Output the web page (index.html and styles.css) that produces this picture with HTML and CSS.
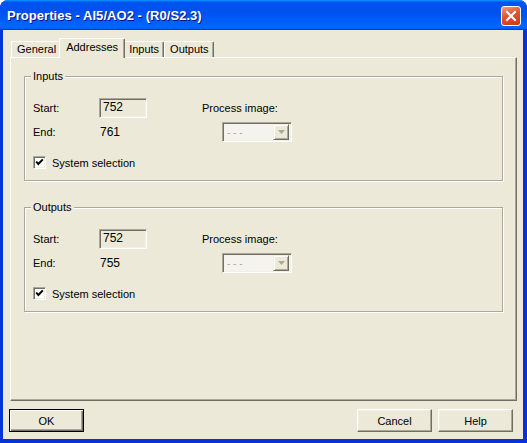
FILE: index.html
```html
<!DOCTYPE html>
<html>
<head>
<meta charset="utf-8">
<link rel="stylesheet" href="styles.css">
</head>
<body>
<div class="window">
  <div class="titlebar">
    <span class="title">Properties - AI5/AO2 - (R0/S2.3)</span>
    <span class="close"><svg width="20" height="20" viewBox="0 0 20 20"><path d="M6 6 L14 14 M14 6 L6 14" stroke="#fff" stroke-width="2" stroke-linecap="square"/></svg></span>
  </div>
  <div class="client">
    <div class="tabs">
      <div class="tab">General</div>
      <div class="tab active">Addresses</div>
      <div class="tab">Inputs</div>
      <div class="tab">Outputs</div>
    </div>
    <div class="panel">
      <fieldset class="group">
        <legend>Inputs</legend>
        <div class="gbody">
          <div class="grid">
            <span>Start:</span>
            <span class="field">752</span>
            <span>Process image:</span>
            <span>End:</span>
            <span class="val">761</span>
            <span class="combo"><span class="ctext">- - -</span><span class="arrow"><svg width="7" height="4" viewBox="0 0 7 4"><path d="M0 0 H7 L3.5 4 Z" fill="#aca899"/></svg></span></span>
          </div>
          <div class="check"><span class="box"><svg width="9" height="9" viewBox="0 0 9 9"><path d="M1.2 3.6 L3.4 6 L7.8 1.4" fill="none" stroke="#000" stroke-width="2"/></svg></span><span>System selection</span></div>
        </div>
      </fieldset>
      <fieldset class="group second">
        <legend>Outputs</legend>
        <div class="gbody">
          <div class="grid">
            <span>Start:</span>
            <span class="field">752</span>
            <span>Process image:</span>
            <span>End:</span>
            <span class="val">755</span>
            <span class="combo"><span class="ctext">- - -</span><span class="arrow"><svg width="7" height="4" viewBox="0 0 7 4"><path d="M0 0 H7 L3.5 4 Z" fill="#aca899"/></svg></span></span>
          </div>
          <div class="check"><span class="box"><svg width="9" height="9" viewBox="0 0 9 9"><path d="M1.2 3.6 L3.4 6 L7.8 1.4" fill="none" stroke="#000" stroke-width="2"/></svg></span><span>System selection</span></div>
        </div>
      </fieldset>
    </div>
    <div class="buttons">
      <button class="btn default">OK</button>
      <span class="spacer"></span>
      <button class="btn">Cancel</button>
      <button class="btn">Help</button>
    </div>
  </div>
</div>
</body>
</html>
```
FILE: styles.css
```css
* { box-sizing: border-box; }
html, body { margin: 0; padding: 0; }
body {
  width: 527px;
  height: 443px;
  overflow: hidden;
  font-family: "Liberation Sans", Arial, sans-serif;
  font-size: 11px;
  color: #000;
  background: #fff;
}
.window {
  width: 527px;
  height: 443px;
  display: flex;
  flex-direction: column;
  background: #0831d9;
  border-radius: 8px 8px 0 0;
  overflow: hidden;
}
.titlebar {
  height: 30px;
  flex: none;
  display: flex;
  align-items: center;
  justify-content: space-between;
  padding: 0 6px 0 7px;
  background: linear-gradient(180deg, #0997ff, #0053ee 8%, #0050ee 40%, #0066ff 88%, #0066ff 93%, #005bff 95%, #003dd7 96%, #003dd7);
}
.title {
  color: #fff;
  font-weight: bold;
  font-size: 13px;
  text-shadow: 1px 1px 0 #0f1089;
  letter-spacing: 0.05px;
}
.close {
  width: 20px;
  height: 20px;
  margin-top: 1px;
  border: 1px solid #fff;
  border-radius: 3px;
  background: linear-gradient(160deg, #f19a7f 0%, #e0532f 45%, #c93a17 100%);
  display: flex;
  align-items: center;
  justify-content: center;
}
.close svg { display: block; margin: -1px; }
.client {
  flex: 1;
  margin: 0 4px 4px 3px;
  background: #ece9d8;
  display: flex;
  flex-direction: column;
}
.tabs {
  height: 27px;
  flex: none;
  display: flex;
  align-items: flex-end;
  padding-left: 8px;
}
.tab {
  height: 16px;
  padding: 0 4px 0 5px;
  line-height: 15px;
  background: #ece9d8;
  border-top: 1px solid #fff;
  border-left: 1px solid #fff;
  border-right: 1px solid #716f64;
  box-shadow: inset -1px 0 0 #aca899;
  border-radius: 2px 2px 0 0;
}
.tab.active {
  height: 20px;
  margin: 0 -2px -1px -2px;
  padding: 0 6px 0 6px;
  line-height: 17px;
  position: relative;
  z-index: 1;
}
.panel {
  height: 344px;
  flex: none;
  margin: 0 6px 0 7px;
  border: 1px solid;
  border-color: #fff #716f64 #716f64 #fff;
  box-shadow: inset -1px -1px 0 #aca899;
  padding: 12px 13px 0 13px;
}
.group {
  margin: 0;
  padding: 0;
  min-width: 0;
  border: 1px solid #aca899;
  box-shadow: 1px 1px 0 #fff, inset 1px 1px 0 #fff;
}
.group.second { margin-top: 20px; }
.group legend {
  margin-left: 6px;
  padding: 0 2px;
  line-height: 13px;
  background: #ece9d8;
}
.gbody { padding: 15px 8px 11px 8px; }
.grid {
  display: grid;
  grid-template-columns: 66px 103px auto;
  grid-auto-rows: 20px;
  row-gap: 4px;
  align-items: center;
}
.field {
  width: 48px;
  height: 20px;
  padding: 0 3px;
  line-height: 17px;
  font-size: 12px;
  border: 1px solid;
  border-color: #aca899 #fff #fff #aca899;
  box-shadow: inset 1px 1px 0 #716f64, inset -1px -1px 0 #f1efe2;
}
.val { padding-left: 1px; font-size: 12px; }
.combo {
  margin-left: 20px;
  width: 70px;
  height: 20px;
  display: flex;
  align-items: center;
  border: 1px solid;
  border-color: #aca899 #fff #fff #aca899;
  box-shadow: inset 1px 1px 0 #716f64, inset -1px -1px 0 #f1efe2;
  background: #f4f3ee;
  padding: 2px;
}
.ctext {
  flex: 1;
  color: #aca899;
  padding-left: 2px;
  font-size: 10px;
}
.arrow {
  width: 16px;
  height: 16px;
  background: #ece9d8;
  border: 1px solid;
  border-color: #f1efe2 #716f64 #716f64 #f1efe2;
  box-shadow: inset 1px 1px 0 #fff, inset -1px -1px 0 #aca899;
  display: flex;
  align-items: center;
  justify-content: center;
}
.arrow svg { display: block; }
.check {
  margin-top: 14px;
  height: 13px;
  display: flex;
  align-items: center;
  gap: 6px;
}
.box {
  width: 13px;
  height: 13px;
  background: #fff;
  border: 1px solid;
  border-color: #aca899 #fff #fff #aca899;
  box-shadow: inset 1px 1px 0 #716f64, inset -1px -1px 0 #f1efe2;
  display: flex;
  align-items: center;
  justify-content: center;
}
.box svg { display: block; }
.buttons {
  margin-top: 8px;
  height: 23px;
  flex: none;
  display: flex;
  gap: 6px;
  padding: 0 10px 0 6px;
}
.spacer { flex: 1; }
.btn {
  width: 75px;
  height: 23px;
  margin: 0;
  padding: 0;
  font-family: "Liberation Sans", Arial, sans-serif;
  font-size: 11px;
  color: #000;
  background: #ece9d8;
  border: 1px solid;
  border-color: #fff #716f64 #716f64 #fff;
  box-shadow: inset -1px -1px 0 #aca899, inset 1px 1px 0 #f1efe2;
  border-radius: 0;
}
.btn.default {
  border-color: #000;
  box-shadow: inset 1px 1px 0 #fff, inset -1px -1px 0 #716f64, inset -2px -2px 0 #aca899;
}
```
